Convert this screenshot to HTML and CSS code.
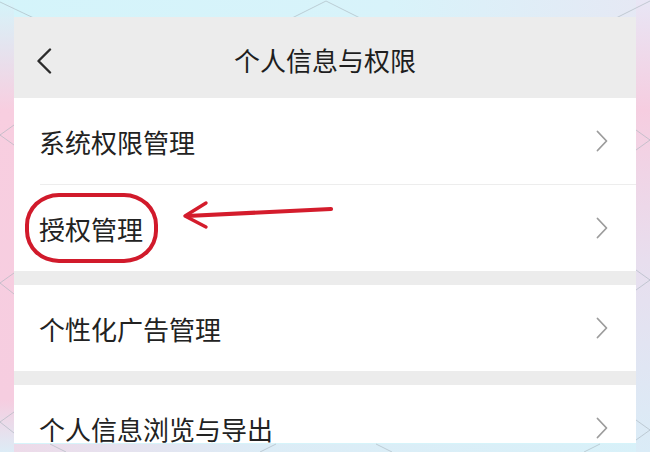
FILE: index.html
```html
<!DOCTYPE html>
<html lang="zh-CN">
<head>
    <meta charset="UTF-8">
    <meta name="viewport" content="width=device-width, initial-scale=1.0">
    <title>个人信息与权限</title>
    <link rel="stylesheet" href="styles.css">
</head>
<body>

    <div class="screen">
        <div class="nav-bar">
            <svg class="back-icon" viewBox="0 0 16 26" width="16" height="26">
                <polyline points="14,1.5 2.5,13 14,24.5" fill="none" stroke="#2b2b2b" stroke-width="2.4" stroke-linecap="round" stroke-linejoin="round"/>
            </svg>
            <h1>个人信息与权限</h1>
        </div>

        <div class="group">
            <div class="row">
                <span>系统权限管理</span>
                <svg class="chevron" viewBox="0 0 12 22" width="12" height="22"><polyline points="1.5,1.5 10.5,11 1.5,20.5"/></svg>
            </div>
            <div class="divider"></div>
            <div class="row">
                <span>授权管理</span>
                <svg class="chevron" viewBox="0 0 12 22" width="12" height="22"><polyline points="1.5,1.5 10.5,11 1.5,20.5"/></svg>
            </div>
        </div>

        <div class="group">
            <div class="row">
                <span>个性化广告管理</span>
                <svg class="chevron" viewBox="0 0 12 22" width="12" height="22"><polyline points="1.5,1.5 10.5,11 1.5,20.5"/></svg>
            </div>
        </div>

        <div class="group">
            <div class="row row-cut">
                <span>个人信息浏览与导出</span>
                <svg class="chevron" viewBox="0 0 12 22" width="12" height="22"><polyline points="1.5,1.5 10.5,11 1.5,20.5"/></svg>
            </div>
        </div>

        <!-- annotation drawn over the screenshot -->
        <div class="mark-ring"></div>
        <svg class="mark-arrow" viewBox="0 0 170 36" width="170" height="36">
            <line x1="152" y1="12" x2="8" y2="19" stroke="#d41c2c" stroke-width="4.2" stroke-linecap="round"/>
            <polyline points="27,6 6,19 27,30" fill="none" stroke="#d41c2c" stroke-width="3.4" stroke-linecap="round" stroke-linejoin="round"/>
        </svg>
    </div>

</body>
</html>
```

FILE: styles.css
```css
html, body {
    margin: 0;
    padding: 0;
}
body {
    width: 650px;
    height: 452px;
    overflow: hidden;
    font-family: "Noto Sans CJK SC", "Noto Sans", sans-serif;
    color: #222;
    padding: 17px 14px 0;
    box-sizing: border-box;
    background-color: #d6f4fa;
    background-image:
        url("data:image/svg+xml;utf8,<svg xmlns='http://www.w3.org/2000/svg' width='650' height='452'><g fill='none' stroke='%23a9b4bd' stroke-opacity='0.6' stroke-width='1'><polyline points='0,2 38,20'/><polyline points='288,20 326,1 364,20'/><polyline points='612,20 650,1'/><polyline points='14,125 0,135 14,145'/><polyline points='14,273 0,283 14,294'/><polyline points='14,412 0,422 14,433'/><polyline points='636,130 650,140 636,150'/><polyline points='636,270 650,280 636,290'/><polyline points='636,420 650,430 636,440'/><polyline points='50,444 66,452'/><polyline points='260,452 276,444'/><polyline points='376,444 392,452'/><polyline points='584,452 600,444'/></g></svg>"),
        linear-gradient(to bottom, rgba(248, 206, 224, 0) 0, rgba(248, 206, 224, 1) 110px, rgba(246, 205, 224, 1) 400px, rgba(221, 236, 246, 1) 452px),
        linear-gradient(to bottom, rgba(232, 230, 245, 1) 0, rgba(246, 205, 224, 1) 110px, rgba(232, 222, 238, 1) 260px, rgba(218, 236, 247, 1) 452px),
        linear-gradient(to right, #eed9e8 0, #dcecf6 40%, #d8f1f9 100%),
        linear-gradient(to right, #d4f4fa 0, #d8f3fa 60%, #e6e8f4 100%);
    background-repeat: no-repeat;
    background-size: 650px 452px, 14px 452px, 14px 452px, 650px 8px, 650px 17px;
    background-position: 0 0, 0 0, 636px 0, 0 444px, 0 0;
}
.screen {
    position: relative;
    width: 622px;
    background-color: #ececec;
}
.nav-bar {
    height: 81px;
    display: flex;
    align-items: center;
    justify-content: center;
    position: relative;
    background-color: #ececec;
}
.nav-bar h1 {
    margin: 0;
    font-size: 26px;
    font-weight: 400;
    line-height: 1;
    color: #1e1e1e;
    padding-top: 4px;
}
.back-icon {
    position: absolute;
    left: 22px;
    top: 31px;
}
.group {
    background-color: #ffffff;
    margin-bottom: 14px;
}
.group:last-of-type {
    margin-bottom: 0;
}
.row {
    height: 86px;
    display: flex;
    align-items: center;
    justify-content: space-between;
    padding: 0 28px 0 25px;
    font-size: 26px;
    line-height: 22px;
    box-sizing: border-box;
}
.row span {
    margin-top: 2px;
}
.group:first-of-type .row:first-child {
    height: 87px;
}
/* last row is cut off by the bottom of the screenshot */
.row-cut {
    height: 58px;
    padding-top: 28px;
}
.divider {
    height: 1px;
    margin-left: 26px;
    background-color: #ededed;
}
.chevron {
    fill: none;
    stroke: #9c9c9c;
    stroke-width: 1.8;
    stroke-linecap: round;
    stroke-linejoin: round;
}
.mark-ring {
    position: absolute;
    left: 11px;
    top: 176px;
    width: 133px;
    height: 70px;
    box-sizing: border-box;
    border: 4px solid #d11a2b;
    border-radius: 34px / 32px;
}
.mark-arrow {
    position: absolute;
    left: 165px;
    top: 180px;
}
```
